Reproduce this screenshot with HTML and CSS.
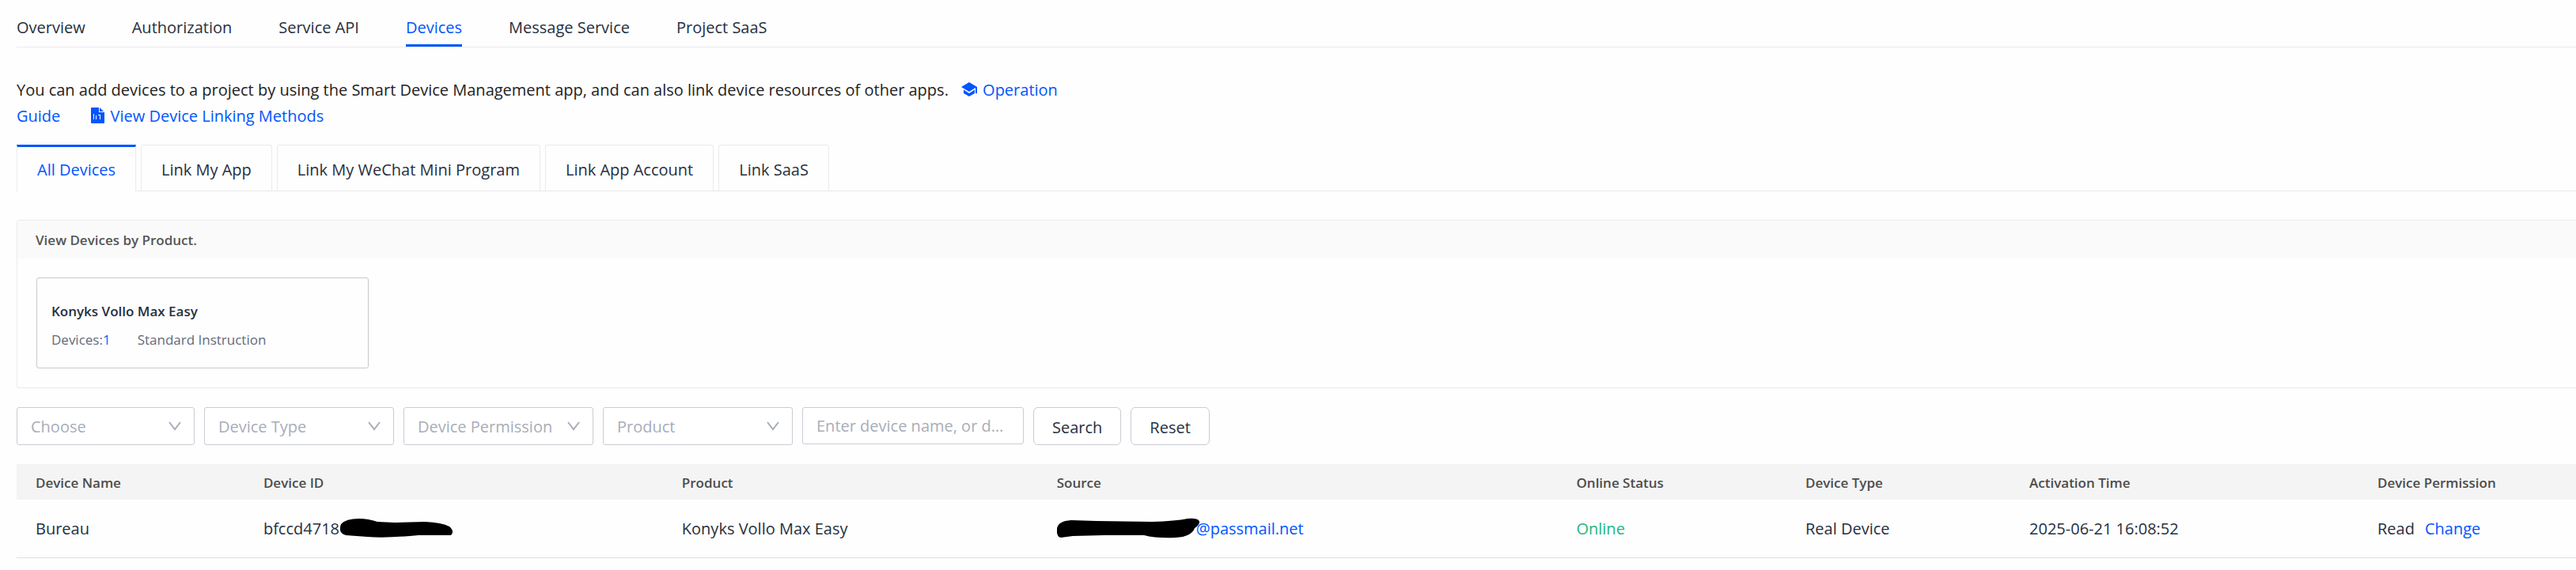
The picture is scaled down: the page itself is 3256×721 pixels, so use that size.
FILE: index.html
```html
<!DOCTYPE html>
<html lang="en">
	<head>
		<meta charset="UTF-8">
		<meta name="viewport" content="width=device-width, initial-scale=1.0" />
		<title>Devices</title>
		<link rel="stylesheet" href="styles.css">
	</head>
	<body>
		<nav class="nav">
			<a href="#">Overview</a>
			<a href="#">Authorization</a>
			<a href="#">Service API</a>
			<a href="#" class="active">Devices</a>
			<a href="#">Message Service</a>
			<a href="#">Project SaaS</a>
		</nav>

		<p class="intro">You can add devices to a project by using the Smart Device Management app, and can also link device resources of other apps.
			<a href="#" class="guide"><svg class="icon" width="20" height="20" viewBox="0 0 20 20"><path fill="currentColor" d="M10 1L0 7l10 6 8-5v7h2V7zM3 10.500v4.500l7 4 7-4v-4.500L10 15z"/></svg>Operation Guide</a>
			<a href="#" class="methods"><svg class="icon" width="18" height="20" viewBox="0 0 18 20"><path fill="currentColor" fill-rule="evenodd" d="M1 0h9v6h7v13q0 1-1 1H1q-1 0-1-1V1q0-1 1-1zM11 0l5 5h-5zM3 8v7h1V8zM6 10v5h1v-5zM9 9v1h2v5h1V9z"/></svg>View Device Linking Methods</a>
		</p>

		<div class="tabs">
			<button type="button" class="tab active">All Devices</button>
			<button type="button" class="tab">Link My App</button>
			<button type="button" class="tab">Link My WeChat Mini Program</button>
			<button type="button" class="tab">Link App Account</button>
			<button type="button" class="tab">Link SaaS</button>
		</div>

		<section class="panel">
			<h2>View Devices by Product.</h2>
			<div class="panel-body">
				<div class="product">
					<h3>Konyks Vollo Max Easy</h3>
					<div class="meta"><span>Devices:<b>1</b></span><span>Standard Instruction</span></div>
				</div>
			</div>
		</section>

		<form class="filters">
			<select class="short" aria-label="Choose"><option>Choose</option></select>
			<select aria-label="Device Type"><option>Device Type</option></select>
			<select aria-label="Device Permission"><option>Device Permission</option></select>
			<select aria-label="Product"><option>Product</option></select>
			<input type="text" aria-label="Device name or ID" placeholder="Enter device name, or device ID">
			<button type="button">Search</button>
			<button type="button">Reset</button>
		</form>

		<table class="devices">
			<colgroup>
				<col class="c-name"><col class="c-id"><col class="c-product"><col class="c-source"><col class="c-status"><col class="c-type"><col class="c-time"><col>
			</colgroup>
			<thead>
				<tr>
					<th>Device Name</th>
					<th>Device ID</th>
					<th>Product</th>
					<th>Source</th>
					<th>Online Status</th>
					<th>Device Type</th>
					<th>Activation Time</th>
					<th>Device Permission</th>
				</tr>
			</thead>
			<tbody>
				<tr>
					<td>Bureau</td>
					<td><span class="masked">bfccd4718<svg width="144" height="26" viewBox="0 0 144 26"><path d="M2 8Q8 1 25 1Q36 1 48 5L70 6L108 5Q130 6 139 11Q146 17 141 22L132 22L100 22Q60 26 35 24L8 22Q-2 19 2 8z"/></svg></span></td>
					<td>Konyks Vollo Max Easy</td>
					<td><a href="#" class="masked"><svg width="180" height="26" viewBox="0 0 180 26"><path d="M0 14Q1 4 18 3L50 4L120 5Q150 4 165 1Q181 0 180 6Q179 10 174 13Q170 24 150 25Q125 26 110 22L60 22L20 23L5 25Q-1 24 0 14z"/></svg>@passmail.net</a></td>
					<td class="online">Online</td>
					<td>Real Device</td>
					<td>2025-06-21 16:08:52</td>
					<td>Read<a href="#" class="change">Change</a></td>
				</tr>
			</tbody>
		</table>
	</body>
</html>
```
FILE: styles.css
```css
*{box-sizing:border-box;}
body{margin:0;padding:10px 0 16px 21px;background:#fefefe;color:#26303f;font:20px/33px "Open Sans","Noto Sans",sans-serif;}
a{color:#0055ff;text-decoration:none;}
button,input,select{font:inherit;color:inherit;}

.nav{display:flex;gap:59px;height:50px;border-bottom:1px solid #e9eaf0;}
.nav a{height:50px;line-height:49px;color:inherit;}
.nav a.active{color:#0055ff;border-bottom:3px solid #0055ff;height:49px;}

.intro{max-width:1340px;margin:37px 0 20px;color:#222;}
.intro .guide{margin-left:11px;}
.intro .methods{margin-left:33px;}
.icon{margin-right:7px;vertical-align:-2px;}

.tabs{display:flex;gap:6px;border-bottom:1px solid #e8e8e8;}
.tab{height:58px;padding:3px 25px 0;background:#fefefe;border:1px solid #ebebeb;border-bottom:0;border-radius:3px 3px 0 0;}
.tab.active{height:59px;padding-top:0;margin-bottom:-1px;color:#0055ff;border-top:3px solid #0055ff;border-radius:0;}

.panel{margin-top:36px;border:1px solid #ebebee;border-right:0;border-radius:3px 0 0 3px;}
.panel h2{margin:0;padding:0 23px;height:48px;line-height:50px;background:#fafafa;color:#555;font-size:17px;font-weight:600;}
.panel-body{padding:24px;}
.product{width:420px;height:115px;padding:30px 18px;border:1px solid #c9c9c9;border-radius:3px;font-size:17px;line-height:24px;}
.product h3{margin:0 0 12px;font-size:17px;font-weight:600;}
.meta{display:flex;gap:34px;color:#626a7c;}
.meta b{color:#0066ff;font-weight:400;}

.filters{display:flex;gap:12px;margin-top:24px;}
.filters select{appearance:none;width:240px;height:48px;padding:0 40px 0 17px;color:#a8adba;border:1px solid #c9ccd4;border-radius:3px;background:#fff url("data:image/svg+xml,%3Csvg xmlns='http://www.w3.org/2000/svg' width='16' height='12'%3E%3Cpath d='M1 1l7 9 7-9' fill='none' stroke='%23a8adba' stroke-width='2'/%3E%3C/svg%3E") no-repeat right 16px center;}
.filters .short{width:225px;}
.filters input{width:280px;height:47px;padding:0 17px;border:1px solid #c9ccd4;border-radius:3px;background:#fff;text-overflow:ellipsis;}
.filters input::placeholder{color:#a8adba;opacity:1;}
.filters button{height:48px;padding:2px 23px 0;border:1px solid #c9ccd4;border-radius:6px;background:#fff;}

.devices{width:100%;margin-top:24px;table-layout:fixed;border-collapse:collapse;text-align:left;}
.c-name{width:8.9%;}
.c-id{width:16.35%;}
.c-product{width:14.65%;}
.c-source{width:20.3%;}
.c-status{width:8.95%;}
.c-type{width:8.75%;}
.c-time{width:13.6%;}
.devices th{height:45px;padding:1px 0 0 24px;background:#f4f4f4;color:#4c4c4c;font-size:17px;font-weight:600;}
.devices td{height:73px;padding:0 0 0 24px;border-bottom:1px solid #dedfe2;}
.masked{display:flex;align-items:center;}
.masked svg{fill:#000;margin-right:-4px;}
.devices .online{color:#27b87d;}
.change{margin-left:13px;}
```
